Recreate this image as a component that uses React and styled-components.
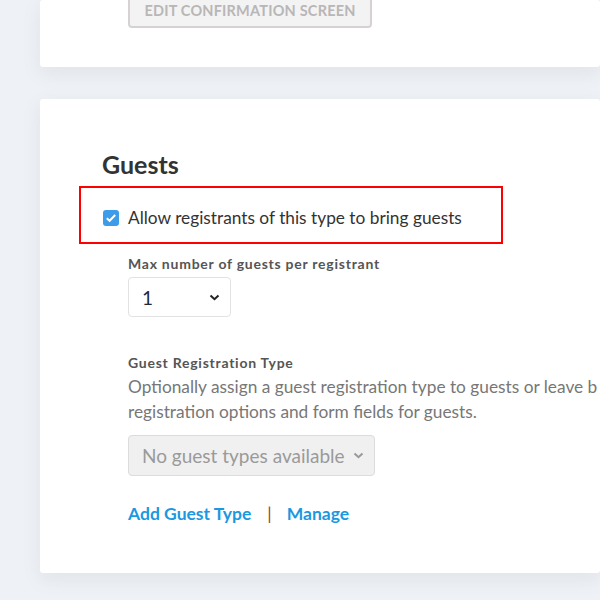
import styled, { createGlobalStyle } from "styled-components";

const GlobalStyle = createGlobalStyle`
  body {
    margin: 0;
    background: #eef1f5;
    font-family: Lato, "Open Sans", sans-serif;
    overflow: hidden;
  }
`;

const Page = styled.div`
  padding-left: 40px;
  height: 600px;
`;

const Card = styled.section`
  background: #fff;
  border-radius: 3px;
  box-shadow: 0 6px 18px rgba(120, 130, 150, 0.12);
  overflow: hidden;
`;

const TopCard = styled(Card)`
  height: 67px;
  padding-left: 88px;
  margin-bottom: 32px;
  overflow: visible;
`;

const GhostButton = styled.button`
  margin-top: -9px;
  height: 34px;
  width: 244px;
  padding: 0;
  background: #f3f3f3;
  border: 2px solid #d6d2d3;
  border-radius: 4px;
  color: #b9b6b7;
  font: 700 14.5px Lato, sans-serif;
  letter-spacing: 0.2px;
`;

const GuestsCard = styled(Card)`
  height: 474px;
  box-sizing: border-box;
  padding: 50px 0 0 39px;
`;

const Heading = styled.h2`
  margin: 0 0 7px 23px;
  font-size: 25px;
  font-weight: 700;
  color: #333;
  line-height: 30px;
`;

const Highlight = styled.div`
  width: 424px;
  height: 58px;
  box-sizing: border-box;
  border: 2px solid #f00;
  display: flex;
  align-items: center;
  gap: 9px;
  padding: 5px 0 0 22px;
`;

const Check = styled.span`
  width: 16px;
  height: 16px;
  border-radius: 3px;
  background: #3d9cea;
  display: flex;
  align-items: center;
  justify-content: center;
`;

const CheckLabel = styled.span`
  font-size: 17.3px;
  color: #333;
`;

const Indent = styled.div`
  padding-left: 49px;
`;

const FieldLabel = styled.div`
  font-size: 14px;
  font-weight: 700;
  color: #555;
  letter-spacing: 0.75px;
  margin-top: ${(p) => p.$top}px;
  margin-bottom: 5px;
`;

const Select = styled.div`
  box-sizing: border-box;
  width: ${(p) => p.$width}px;
  height: ${(p) => p.$height}px;
  border: 1px solid ${(p) => (p.$disabled ? "#dcdcdc" : "#e2e2e2")};
  background: ${(p) => (p.$disabled ? "#f0f0f0" : "#fff")};
  border-radius: 4px;
  display: flex;
  align-items: center;
  justify-content: space-between;
  padding: 0 10px 0 13px;
  font-size: 19px;
  color: ${(p) => (p.$disabled ? "#9a9a9a" : "#1e2a3a")};
`;

const Description = styled.p`
  margin: -2px 0 11px;
  font-size: 17.3px;
  line-height: 25px;
  color: #777;
  white-space: nowrap;
`;

const Links = styled.div`
  display: flex;
  align-items: center;
  margin-top: 27px;
  font-size: 17.5px;
  font-weight: 700;
`;

const Link = styled.a`
  color: #1b98e0;
  text-decoration: none;
`;

const Divider = styled.span`
  color: #a03c3c;
  font-weight: 400;
  margin: 0 15px 0 16px;
`;

const Chevron = ({ color }) => (
  <svg width="11" height="7" viewBox="0 0 11 7">
    <path d="M1.5 1.5 L5.5 5.2 L9.5 1.5" fill="none" stroke={color} strokeWidth="2" />
  </svg>
);

export default function App() {
  return (
    <Page>
      <GlobalStyle />
      <TopCard>
        <GhostButton>EDIT CONFIRMATION SCREEN</GhostButton>
      </TopCard>
      <GuestsCard>
        <Heading>Guests</Heading>
        <Highlight>
          <Check>
            <svg width="12" height="10" viewBox="0 0 12 10">
              <path d="M1.8 5.2 L4.6 7.8 L10.2 2" fill="none" stroke="#fff" strokeWidth="2" />
            </svg>
          </Check>
          <CheckLabel>Allow registrants of this type to bring guests</CheckLabel>
        </Highlight>
        <Indent>
          <FieldLabel $top={11}>Max number of guests per registrant</FieldLabel>
          <Select $width={103} $height={40}>
            1
            <Chevron color="#222" />
          </Select>
          <FieldLabel $top={37}>Guest Registration Type</FieldLabel>
          <Description>
            Optionally assign a guest registration type to guests or leave b
            <br />
            registration options and form fields for guests.
          </Description>
          <Select $width={247} $height={41} $disabled>
            No guest types available
            <Chevron color="#999" />
          </Select>
          <Links>
            <Link href="#">Add Guest Type</Link>
            <Divider>|</Divider>
            <Link href="#">Manage</Link>
          </Links>
        </Indent>
      </GuestsCard>
    </Page>
  );
}
